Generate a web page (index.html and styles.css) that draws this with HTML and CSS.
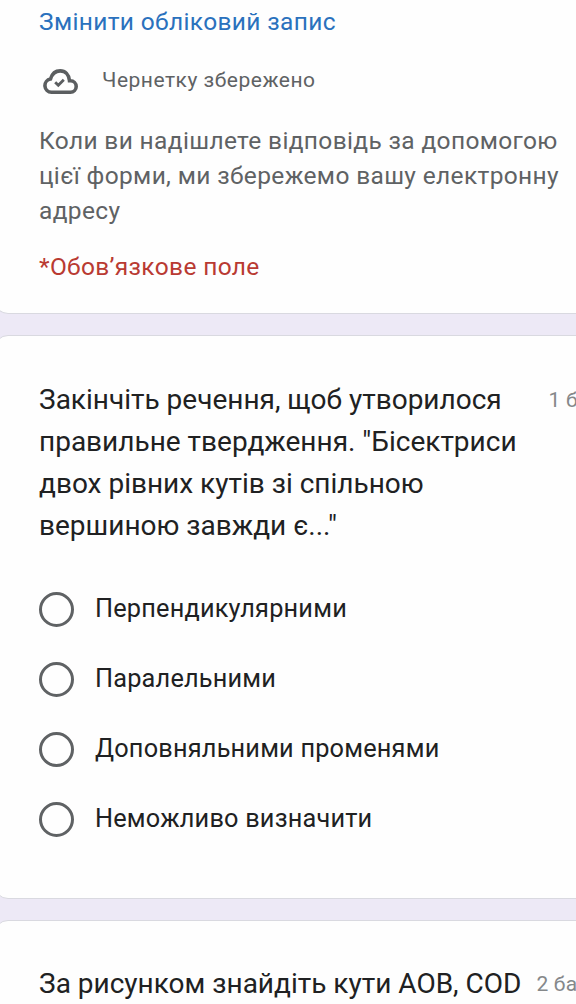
FILE: index.html
```html
<!DOCTYPE html>
<html lang="uk">
<head>
    <meta charset="UTF-8">
    <title>Форма</title>
    <link rel="stylesheet" href="styles.css">
</head>
<body>
<div class="form">
    <div class="card intro">
        <a class="account">Змінити обліковий запис</a>
        <div class="draft">
            <svg class="cloud" viewBox="0 0 35 26">
                <path d="M8.5 23.3a6.7 6.7 0 0 1-1-13.3C9 5 12.6 1.9 17.2 1.9c5 0 8.8 3.6 9.3 9.8h.9a5.8 5.8 0 0 1 0 11.6z"/>
                <path class="tick" d="M12.2 13.2l3.1 3.1 5.5-5.5"/>
            </svg>
            <span>Чернетку збережено</span>
        </div>
        <p class="notice">Коли ви надішлете відповідь за допомогою<br>цієї форми, ми збережемо вашу електронну<br>адресу</p>
        <p class="required">*Обов’язкове поле</p>
    </div>
    <div class="card question">
        <div class="head">
            <h2>Закінчіть речення, щоб утворилося<br>правильне твердження. "Бісектриси<br>двох рівних кутів зі спільною<br>вершиною завжди є..."</h2>
            <span class="points">1 бал</span>
        </div>
        <ul class="options">
            <li><i class="radio"></i><span>Перпендикулярними</span></li>
            <li><i class="radio"></i><span>Паралельними</span></li>
            <li><i class="radio"></i><span>Доповняльними променями</span></li>
            <li><i class="radio"></i><span>Неможливо визначити</span></li>
        </ul>
    </div>
    <div class="card question">
        <div class="head">
            <h2>За рисунком знайдіть кути AOB, COD</h2>
            <span class="points">2 бали</span>
        </div>
    </div>
</div>
</body>
</html>
```
FILE: styles.css
```css
*{
    margin: 0;
    padding: 0;
    box-sizing: border-box;
}
li{
    list-style: none;
}
html{
    overflow: hidden;
}
body{
    height: 1004px;
    overflow: hidden;
    background: #ede9f6;
    font-family: Roboto, "Noto Sans", sans-serif;
    color: #202122;
}
.form{
    width: 650px;
    margin-left: -6px;
    display: flex;
    flex-direction: column;
    gap: 21px;
}
.card{
    background: #fefefe;
    border: 1px solid #d9d9e0;
    border-radius: 14px;
    padding-left: 44px;
}
.intro{
    height: 314px;
    padding-top: 4px;
    border-top: 0;
    border-radius: 0 0 14px 14px;
    font-size: 24.5px;
    line-height: 35px;
    letter-spacing: 0.35px;
    color: #5f6264;
}
.account{
    display: block;
    color: #2a71bd;
}
.draft{
    display: flex;
    align-items: center;
    height: 35px;
    margin-top: 24px;
    font-size: 21px;
    letter-spacing: 0.5px;
}
.cloud{
    width: 35px;
    height: 26px;
    margin: 2px 24px 0 4px;
    fill: none;
    stroke: #5b5e60;
    stroke-width: 3.6;
}
.cloud .tick{
    stroke-width: 2.8;
}
.notice{
    margin-top: 25px;
    white-space: nowrap;
}
.required{
    margin-top: 21px;
    color: #b93a32;
}
.question{
    height: 564px;
    padding-top: 43px;
}
.head{
    display: flex;
}
.head h2{
    font-size: 28px;
    font-weight: 400;
    line-height: 42px;
    white-space: nowrap;
}
.question:last-child .head{
    margin-top: -1px;
}
.points{
    width: 96px;
    margin-left: 32px;
    font-size: 21px;
    line-height: 42px;
    letter-spacing: 0.2px;
    white-space: nowrap;
    color: #85888a;
}
.question:last-child .points{
    margin-left: 15px;
}
.options{
    margin-top: 27px;
}
.options li{
    display: flex;
    align-items: center;
    height: 70px;
    font-size: 25.3px;
    letter-spacing: 0.2px;
}
.options span{
    padding-bottom: 2px;
}
.radio{
    width: 35px;
    height: 35px;
    margin-right: 21px;
    border: 3px solid #5f6264;
    border-radius: 50%;
}
```
